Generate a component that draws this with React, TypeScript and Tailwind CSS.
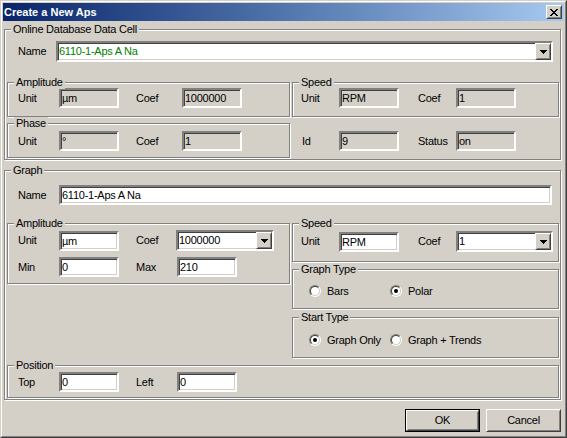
import React from 'react';

const sunken =
  'border-2 border-t-[#808080] border-l-[#808080] border-b-white border-r-white shadow-[inset_1px_1px_0_#404040,inset_-1px_-1px_0_#d4d0c8]';
const raised =
  'border border-t-white border-l-white border-b-[#404040] border-r-[#404040] shadow-[inset_1px_1px_0_#d4d0c8,inset_-1px_-1px_0_#808080]';

type GroupProps = { label: string; className?: string; children?: React.ReactNode };

function Group({ label, className = '', children }: GroupProps) {
  return (
    <div className={`relative shrink-0 border border-[#808080] shadow-[1px_1px_0_#fff,inset_1px_1px_0_#fff] ${className}`}>
      <span className="absolute -top-[7px] left-[6px] bg-[#d4d0c8] px-[2px] leading-[13px] whitespace-nowrap">{label}</span>
      {children}
    </div>
  );
}

function Field({ value, disabled = false, className = 'w-[60px]' }: { value: string; disabled?: boolean; className?: string }) {
  return (
    <div className={`${sunken} ${className} h-[20px] shrink-0 overflow-hidden whitespace-nowrap pl-[1px] leading-[16px] ${disabled ? 'bg-[#d4d0c8]' : 'bg-white'}`}>
      {value}
    </div>
  );
}

function DropArrow() {
  return (
    <svg width="7" height="4" viewBox="0 0 7 4" shapeRendering="crispEdges">
      <path d="M0 0h7v1H0zM1 1h5v1H1zM2 2h3v1H2zM3 3h1v1H3z" fill="#000" />
    </svg>
  );
}

function Combo({ value, className, green = false }: { value: string; className: string; green?: boolean }) {
  return (
    <div className={`${sunken} ${className} flex h-[21px] shrink-0 items-center bg-white`}>
      <span className={`flex-1 overflow-hidden whitespace-nowrap pl-[1px] leading-[17px] ${green ? 'text-[#008000]' : ''}`}>{value}</span>
      <div className={`${raised} flex h-[17px] w-[16px] items-center justify-center bg-[#d4d0c8]`}>
        <DropArrow />
      </div>
    </div>
  );
}

function Radio({ checked = false }: { checked?: boolean }) {
  return (
    <span className="inline-flex h-[12px] w-[12px] shrink-0 rounded-full border border-t-[#808080] border-l-[#808080] border-b-white border-r-white">
      <span className="flex h-full w-full items-center justify-center rounded-full border border-t-[#404040] border-l-[#404040] border-b-[#d4d0c8] border-r-[#d4d0c8] bg-white">
        {checked && <span className="h-[4px] w-[4px] rounded-full bg-black" />}
      </span>
    </span>
  );
}

function CloseGlyph() {
  return (
    <svg width="8" height="7" viewBox="0 0 8 7" shapeRendering="crispEdges">
      <path
        d="M0 0h2v1H0zM6 0h2v1H6zM1 1h2v1H1zM5 1h2v1H5zM2 2h4v1H2zM3 3h2v1H3zM2 4h4v1H2zM1 5h2v1H1zM5 5h2v1H5zM0 6h2v1H0zM6 6h2v1H6z"
        fill="#000"
      />
    </svg>
  );
}

export default function App() {
  return (
    <div className="h-[438px] w-[567px] border border-t-[#d4d0c8] border-l-[#d4d0c8] border-b-[#404040] border-r-[#404040] bg-[#d4d0c8] font-['Liberation_Sans',Arial,sans-serif] text-[11px] tracking-[-0.25px] text-black">
      <div className="flex h-full flex-col border border-t-white border-l-white border-b-[#808080] border-r-[#808080] p-px">
        {/* title bar */}
        <div className="flex h-[18px] shrink-0 items-center bg-linear-to-r from-[#0a246a] to-[#a6caf0] pl-[1px] pr-[2px]">
          <span className="flex-1 text-[11px] font-bold tracking-normal text-white">Create a New Aps</span>
          <div className={`${raised} flex h-[14px] w-[16px] items-center justify-center bg-[#d4d0c8]`}>
            <CloseGlyph />
          </div>
        </div>

        {/* Online Database Data Cell */}
        <Group label="Online Database Data Cell" className="ml-[1px] mt-[8px] h-[131px] w-[557px]">
          <div className="mt-[11px] flex items-center pl-[13px]">
            <span className="w-[38px]">Name</span>
            <Combo value="6110-1-Aps A Na" className="w-[497px]" green />
          </div>
          <div className="ml-[2px] mt-[20px] flex gap-[2px]">
            <Group label="Amplitude" className="h-[35px] w-[283px]">
              <div className="mt-[5px] flex items-center pl-[10px]">
                <span className="w-[41px]">Unit</span>
                <Field value="µm" disabled />
                <span className="ml-[17px] w-[46px]">Coef</span>
                <Field value="1000000" disabled />
              </div>
            </Group>
            <Group label="Speed" className="h-[35px] w-[267px]">
              <div className="mt-[5px] flex items-center pl-[8px]">
                <span className="w-[38px]">Unit</span>
                <Field value="RPM" disabled />
                <span className="ml-[19px] w-[38px]">Coef</span>
                <Field value="1" disabled />
              </div>
            </Group>
          </div>
          <div className="ml-[2px] mt-[6px] flex gap-[2px]">
            <Group label="Phase" className="h-[35px] w-[283px]">
              <div className="mt-[7px] flex items-center pl-[10px]">
                <span className="w-[41px]">Unit</span>
                <Field value="°" disabled />
                <span className="ml-[17px] w-[46px]">Coef</span>
                <Field value="1" disabled />
              </div>
            </Group>
            <div className="w-[267px]">
              <div className="mt-[8px] flex items-center pl-[10px]">
                <span className="w-[37px]">Id</span>
                <Field value="9" disabled />
                <span className="ml-[19px] w-[38px]">Status</span>
                <Field value="on" disabled />
              </div>
            </div>
          </div>
        </Group>

        {/* Graph */}
        <Group label="Graph" className="ml-[1px] mt-[10px] h-[230px] w-[557px]">
          <div className="mt-[14px] flex items-center pl-[13px]">
            <span className="w-[41px]">Name</span>
            <Field value="6110-1-Aps A Na" className="w-[493px]" />
          </div>
          <div className="ml-[2px] mt-[18px] flex items-start gap-[2px]">
            <Group label="Amplitude" className="h-[61px] w-[283px]">
              <div className="mt-[6px] flex items-center pl-[10px]">
                <span className="w-[41px]">Unit</span>
                <Field value="µm" />
                <span className="ml-[17px] w-[40px]">Coef</span>
                <Combo value="1000000" className="w-[98px]" />
              </div>
              <div className="mt-[6px] flex items-center pl-[10px]">
                <span className="w-[41px]">Min</span>
                <Field value="0" />
                <span className="ml-[17px] w-[41px]">Max</span>
                <Field value="210" />
              </div>
            </Group>
            <div className="flex flex-col">
              <Group label="Speed" className="h-[39px] w-[267px]">
                <div className="mt-[7px] flex items-center pl-[8px]">
                  <span className="w-[38px]">Unit</span>
                  <Field value="RPM" />
                  <span className="ml-[19px] w-[38px]">Coef</span>
                  <Combo value="1" className="w-[97px]" />
                </div>
              </Group>
              <Group label="Graph Type" className="mt-[7px] h-[40px] w-[267px]">
                <div className="mt-[13px] flex items-center pl-[16px]">
                  <div className="flex w-[81px] items-center">
                    <Radio />
                    <span className="ml-[6px]">Bars</span>
                  </div>
                  <Radio checked />
                  <span className="ml-[6px]">Polar</span>
                </div>
              </Group>
              <Group label="Start Type" className="mt-[8px] h-[41px] w-[267px]">
                <div className="mt-[14px] flex items-center pl-[16px]">
                  <div className="flex w-[81px] items-center">
                    <Radio checked />
                    <span className="ml-[6px]">Graph Only</span>
                  </div>
                  <Radio />
                  <span className="ml-[6px]">Graph + Trends</span>
                </div>
              </Group>
            </div>
          </div>
          <Group label="Position" className="ml-[2px] mt-[7px] h-[33px] w-[552px]">
            <div className="mt-[6px] flex items-center pl-[10px]">
              <span className="w-[41px]">Top</span>
              <Field value="0" />
              <span className="ml-[17px] w-[41px]">Left</span>
              <Field value="0" />
            </div>
          </Group>
        </Group>

        {/* buttons */}
        <div className="mt-[9px] flex justify-end gap-[6px] pr-[3px]">
          <div className="h-[23px] w-[75px] border border-black">
            <div className={`${raised} flex h-full w-full items-center justify-center bg-[#d4d0c8]`}>OK</div>
          </div>
          <div className={`${raised} flex h-[23px] w-[75px] items-center justify-center bg-[#d4d0c8]`}>Cancel</div>
        </div>
      </div>
    </div>
  );
}
